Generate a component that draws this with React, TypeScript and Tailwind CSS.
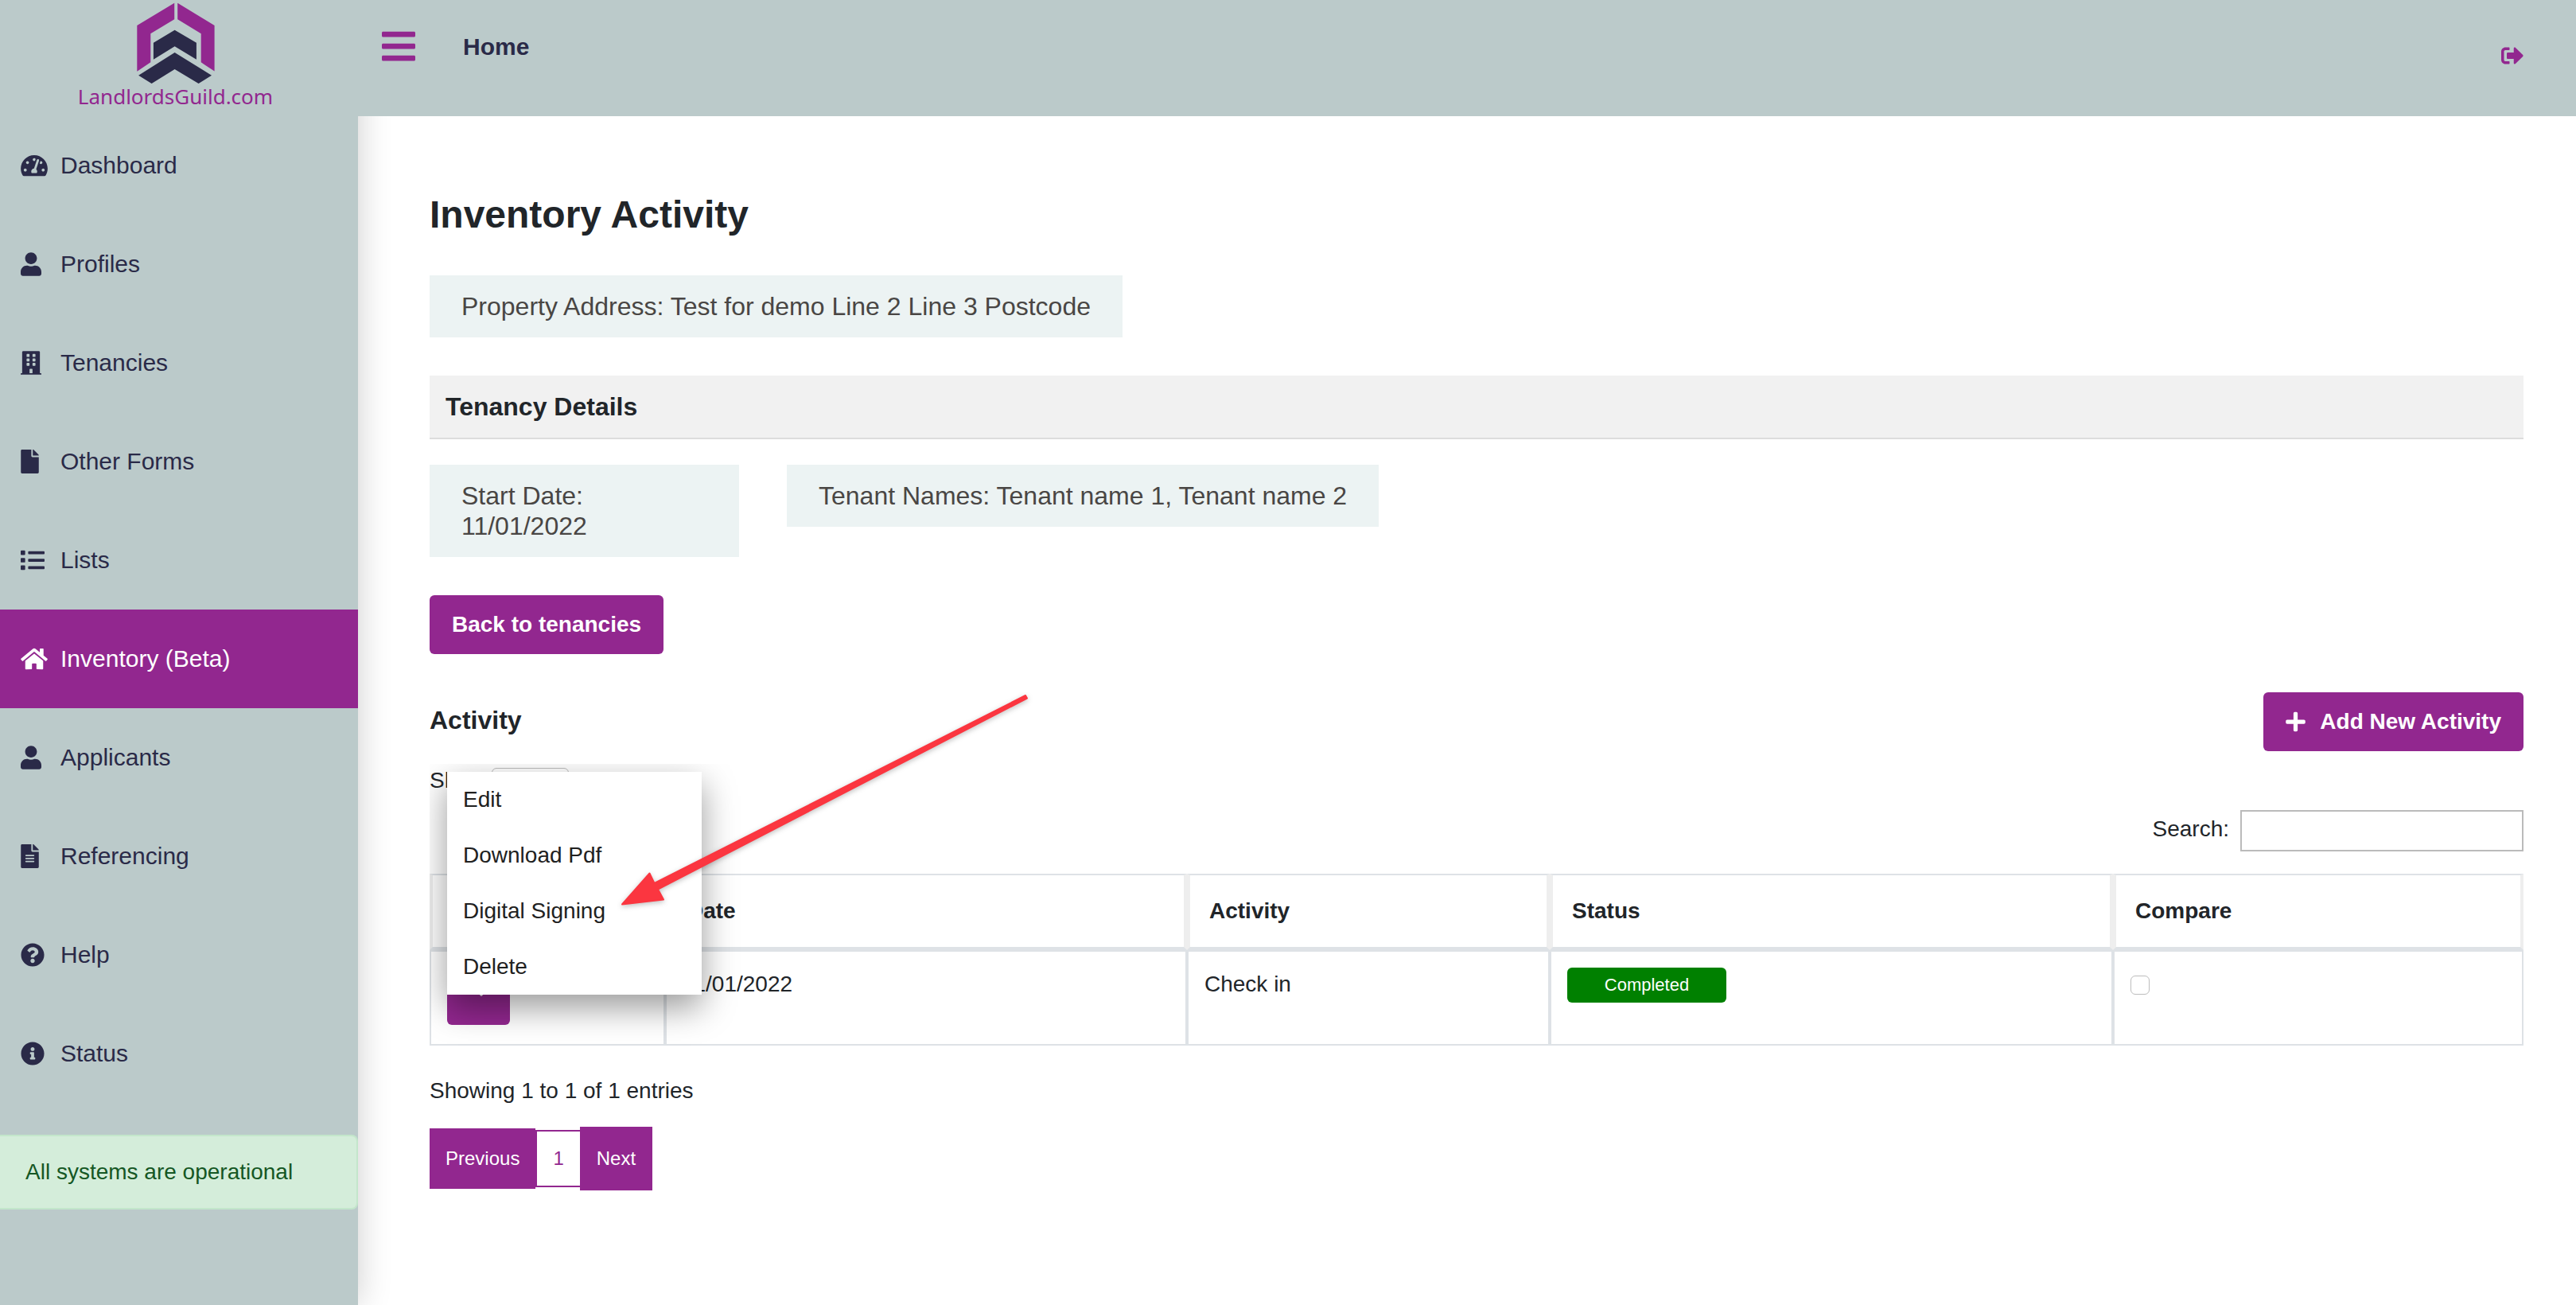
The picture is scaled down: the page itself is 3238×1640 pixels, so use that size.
import React from "react";
import {
  FaBars,
  FaBuilding,
  FaCaretDown,
  FaFile,
  FaFileAlt,
  FaHome,
  FaInfoCircle,
  FaList,
  FaPlus,
  FaQuestionCircle,
  FaSignOutAlt,
  FaTachometerAlt,
  FaUser,
} from "react-icons/fa";
import type { IconType } from "react-icons";

type NavItem = { label: string; icon: IconType; size: string; active?: boolean };

const navItems: NavItem[] = [
  { label: "Dashboard", icon: FaTachometerAlt, size: "h-[30px] w-[34px]" },
  { label: "Profiles", icon: FaUser, size: "h-[30px] w-[26px]" },
  { label: "Tenancies", icon: FaBuilding, size: "h-[30px] w-[26px]" },
  { label: "Other Forms", icon: FaFile, size: "h-[30px] w-[23px]" },
  { label: "Lists", icon: FaList, size: "h-[30px] w-[30px]" },
  { label: "Inventory (Beta)", icon: FaHome, size: "h-[30px] w-[34px]", active: true },
  { label: "Applicants", icon: FaUser, size: "h-[30px] w-[26px]" },
  { label: "Referencing", icon: FaFileAlt, size: "h-[30px] w-[23px]" },
  { label: "Help", icon: FaQuestionCircle, size: "h-[30px] w-[30px]" },
  { label: "Status", icon: FaInfoCircle, size: "h-[30px] w-[30px]" },
];

const menuItems = ["Edit", "Download Pdf", "Digital Signing", "Delete"];

function Logo() {
  return (
    <a href="#home" className="flex h-[146px] flex-col items-center pt-[3px] pr-[9px]">
      <svg viewBox="172 2 98 103" className="h-[103px] w-[98px]" aria-hidden="true">
        <g fill="#92278f">
          <path d="M219.2 2.7V23.3L189.3 41.3V77.3L172.3 88.7V31Z" />
          <path d="M223.2 2.7V23.3L252.7 41.3V77.3L269.6 88.5V31Z" />
        </g>
        <g fill="#2a2a48">
          <path d="M219.6 36.7L246.9 52.7V73.7L219.6 57.3L192.9 73.7V52.7Z" />
          <path d="M219.6 65L266 93.7L249.6 104L219.6 86L190.6 104L174.1 93.7Z" />
        </g>
      </svg>
      <span className="font-['Noto_Sans',sans-serif] text-[26px] leading-[30px] text-[#92278f]">
        LandlordsGuild.com
      </span>
    </a>
  );
}

function Sidebar() {
  return (
    <aside className="w-[450px] shrink-0 bg-[#bbcaca] text-[#2a2a48] shadow-[0_0_40px_rgba(0,0,0,0.2)]">
      <Logo />
      <nav>
        {navItems.map(({ label, icon: Icon, size, active }) => (
          <a
            key={label}
            href="#nav"
            className={
              active
                ? "flex h-[124px] items-center bg-[#92278f] pl-[26px] text-[30px] leading-[44px] text-white"
                : "flex h-[124px] items-center pl-[26px] text-[30px] leading-[44px]"
            }
          >
            <span className="w-[50px]">
              <Icon className={size} />
            </span>
            {label}
          </a>
        ))}
      </nav>
      <div
        role="status"
        className="mt-10 rounded-r-lg border-2 border-l-0 border-[#c3e6cb] bg-[#d4edda] px-8 py-6 text-[28px] leading-[42px] text-[#155724]"
      >
        All systems are operational
      </div>
    </aside>
  );
}

function ActivityTable() {
  const th =
    "border-x-4 border-t-2 border-b-4 border-x-[#eeeeee] border-y-[#dee2e6] px-6 py-6 text-left font-bold";
  const td = "border-x-2 border-y-2 border-[#dee2e6] p-5 align-top";
  return (
    <table className="w-full table-fixed border-separate border-spacing-0 text-[28px] leading-[42px]">
      <colgroup>
        <col className="w-[296px]" />
        <col className="w-[656px]" />
        <col className="w-[456px]" />
        <col className="w-[708px]" />
        <col className="w-[516px]" />
      </colgroup>
      <thead>
        <tr>
          <th className={th} aria-label="Actions" />
          <th className={th}>Date</th>
          <th className={th}>Activity</th>
          <th className={th}>Status</th>
          <th className={th}>Compare</th>
        </tr>
      </thead>
      <tbody>
        <tr>
          <td className={td}>
            <button
              type="button"
              aria-label="Actions"
              className="mb-1 flex h-[72px] w-[79px] items-start justify-center rounded-md bg-[#92278f] pt-4 pl-1.5 text-white"
            >
              <FaCaretDown className="size-7" />
            </button>
          </td>
          <td className={td}>11/01/2022</td>
          <td className={td}>Check in</td>
          <td className={td}>
            <span className="block h-11 w-[200px] rounded-md bg-[#008000] text-center text-[22px] leading-[44px] text-white">
              Completed
            </span>
          </td>
          <td className={td}>
            <input
              type="checkbox"
              aria-label="Compare 11/01/2022 Check in"
              className="mt-2.5 block size-6 appearance-none rounded-md border border-[#bdbdbd] bg-white"
            />
          </td>
        </tr>
      </tbody>
    </table>
  );
}

function ActionMenu() {
  return (
    <div
      role="menu"
      className="absolute top-[10px] left-[22px] w-[320px] bg-white shadow-[0_16px_40px_rgba(0,0,0,0.4)]"
    >
      {menuItems.map((label) => (
        <button
          key={label}
          type="button"
          role="menuitem"
          className="block h-[70px] w-full px-5 text-left text-[28px] text-[#212121]"
        >
          {label}
        </button>
      ))}
    </div>
  );
}

function Arrow() {
  return (
    <svg
      viewBox="770 862 532 290"
      className="pointer-events-none absolute top-[716px] left-[320px] h-[290px] w-[532px] drop-shadow-[0_2px_3px_rgba(0,0,0,0.25)]"
      aria-hidden="true"
    >
      <path
        d="M1289 874L1291 877.500L827 1117.500L834 1130.500L782 1136.500L816.500 1097.500L822.500 1110Z"
        fill="#fb3640"
        stroke="#fb3640"
        strokeWidth="2"
        strokeLinejoin="round"
      />
    </svg>
  );
}

export default function App() {
  return (
    <div className="flex min-h-screen bg-white font-['Liberation_Sans',Arial,sans-serif] text-[#212529]">
      <Sidebar />
      <div className="z-10 min-w-0 flex-1">
        <header className="flex h-[146px] items-start bg-[#bbcaca] pr-[66px] pl-[30px]">
          <button type="button" aria-label="Toggle menu" className="mt-[34px] text-[#92278f]">
            <FaBars className="h-12 w-[42px]" />
          </button>
          <a href="#home" className="mt-10 ml-[60px] text-[30px] leading-[38px] font-bold text-[#2a2a48]">
            Home
          </a>
          <button type="button" aria-label="Log out" className="mt-14 ml-auto text-[#92278f]">
            <FaSignOutAlt className="size-7" />
          </button>
        </header>

        <main className="relative pr-[66px] pl-[90px]">
          <h1 className="pt-[95px] text-[48px] leading-[58px] font-bold">Inventory Activity</h1>
          <p className="mt-[47px] w-fit bg-[#ecf3f3] px-10 py-5 text-[32px] leading-[38px] text-[#494644]">
            Property Address: Test for demo Line 2 Line 3 Postcode
          </p>

          <h2 className="mt-12 border-b-2 border-[#dddddd] bg-[#f1f1f1] px-5 py-5 text-[32px] leading-[38px] font-bold">
            Tenancy Details
          </h2>
          <div className="mt-8 flex items-start gap-[60px] text-[32px] leading-[38px] text-[#494644]">
            <p className="w-[389px] bg-[#ecf3f3] px-10 py-5">
              Start Date:
              <br />
              11/01/2022
            </p>
            <p className="bg-[#ecf3f3] px-10 py-5">Tenant Names: Tenant name 1, Tenant name 2</p>
          </div>

          <button
            type="button"
            className="mt-12 block h-[74px] rounded-md bg-[#92278f] px-7 text-[28px] font-bold text-white"
          >
            Back to tenancies
          </button>

          <div className="mt-12 flex items-center justify-between">
            <h2 className="mb-1 text-[32px] leading-[38px] font-bold">Activity</h2>
            <button
              type="button"
              className="flex h-[74px] items-center gap-[18px] rounded-md bg-[#92278f] px-7 text-[28px] font-bold text-white"
            >
              <FaPlus className="h-7 w-[25px]" />
              Add New Activity
            </button>
          </div>

          <section className="relative mt-4 overflow-hidden text-[28px] leading-[42px]">
            <div className="flex h-[58px] items-start">
              <label className="flex items-start gap-2">
                Show
                <select className="mt-[5px] h-[52px] w-[97px] rounded-md border border-[#bdbdbd] bg-white px-2 text-[24px]">
                  <option>10</option>
                </select>
                entries
              </label>
            </div>
            <div className="mb-7 flex justify-end">
              <label className="flex items-start gap-[14px] leading-[48px]">
                Search:
                <input
                  type="search"
                  className="h-[52px] w-[356px] border-2 border-[#bbbbbb] bg-white px-2 text-[28px]"
                />
              </label>
            </div>
            <ActivityTable />
            <ActionMenu />
            <p className="mt-9">Showing 1 to 1 of 1 entries</p>
            <div className="mt-6 mb-8 flex items-center text-[24px]">
              <button type="button" className="h-[76px] bg-[#92278f] px-5 text-white">
                Previous
              </button>
              <button
                type="button"
                className="h-[72px] border-y-2 border-l-2 border-[#92278f] bg-white px-5 text-[#92278f]"
              >
                1
              </button>
              <button type="button" className="h-20 bg-[#92278f] px-[21px] text-white">
                Next
              </button>
            </div>
          </section>
          <Arrow />
        </main>
      </div>
    </div>
  );
}
